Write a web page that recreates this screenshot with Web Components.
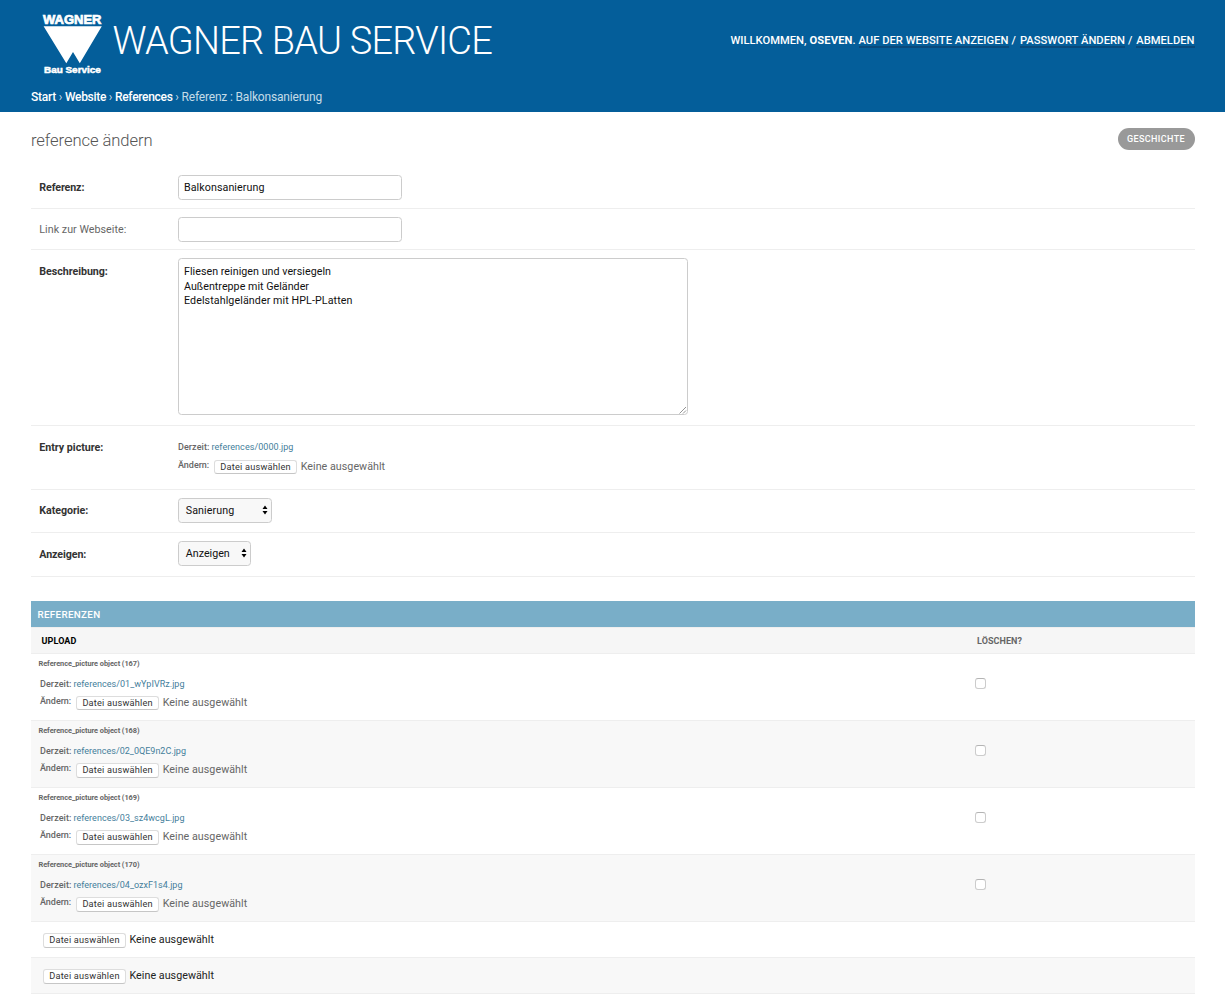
<!DOCTYPE html>
<html lang="de">
<head>
<meta charset="utf-8">
<title>Referenz : Balkonsanierung</title>
<style>
html,body{margin:0;padding:0;background:#fff}
body{font-family:Roboto,"Liberation Sans",sans-serif;font-size:10.7px;color:#333;width:1225px;height:1000px;overflow:hidden}
</style>
</head>
<body>
<admin-page></admin-page>
<script>
const define = (name, render) => customElements.define(name, class extends HTMLElement {
  connectedCallback() {
    if (this.shadowRoot) return;
    this.attachShadow({mode: 'open'}).innerHTML = render(this);
  }
});

define('brand-logo', () => `
<style>:host{display:block;width:62px;height:64px;flex:none}svg{display:block}
text{fill:#fff;font-family:"Liberation Sans",sans-serif;font-weight:700;stroke:#fff}</style>
<svg width="62" height="64" viewBox="0 0 62 64">
<text x="1" y="12.4" font-size="12.6" stroke-width=".7" textLength="58.5" lengthAdjust="spacingAndGlyphs">WAGNER</text>
<path d="M1.6 14.2H59.8L37.8 51.2L31 40L24.3 51.2Z" fill="#fff"/>
<text x="2" y="60.5" font-size="9.2" stroke-width=".5" textLength="56.8" lengthAdjust="spacingAndGlyphs">Bau Service</text>
</svg>`);

define('user-tools', () => `
<style>:host{display:flex;font-size:11.2px;font-weight:500;line-height:14px;color:#fff;margin-top:33px;height:16px}
t-x{position:relative;top:.6px}
a{display:block;height:12.8px;border-bottom:2px solid #094a7c}
b{font-weight:700}</style>
<t-x w="76">WILLKOMMEN,</t-x><b style="margin-left:3px"><t-x w="43">OSEVEN</t-x></b><t-x w="3">.</t-x>
<a style="margin-left:3px"><t-x w="150">AUF DER WEBSITE ANZEIGEN</t-x></a>
<t-x w="5" style="margin:0 3.5px 0 3px">/</t-x><a><t-x w="105">PASSWORT ÄNDERN</t-x></a>
<t-x w="5" style="margin:0 3.2px 0 3px">/</t-x><a><t-x w="58.3">ABMELDEN</t-x></a>`);

define('bread-crumbs', () => `
<style>:host{display:flex;font-size:12px;line-height:16px;color:#c4dce8;padding-left:.5px}
b{font-weight:500;color:#fff}i{font-style:normal;width:9px;text-align:center}</style>
<b><t-x w="25">Start</t-x></b><i>›</i><b><t-x w="41">Website</t-x></b><i>›</i><b><t-x w="57.5">References</t-x></b><i>›</i><t-x w="140.5">Referenz : Balkonsanierung</t-x>`);

define('site-header', () => `
<style>:host{display:flex;flex-direction:column;box-sizing:border-box;height:112px;padding:0 30.5px;background:#045e9a}
.top{display:flex;justify-content:space-between;height:89px}
.brand{display:flex;padding:12px 0 0 11px}
.name{font-size:38px;font-weight:300;line-height:44px;color:#fff;margin:7px 0 0 9px}</style>
<div class="top"><div class="brand"><brand-logo></brand-logo><div class="name"><t-x w="379.5">WAGNER BAU SERVICE</t-x></div></div><user-tools></user-tools></div>
<bread-crumbs></bread-crumbs>`);

define('page-title', () => `
<style>:host{display:flex;justify-content:space-between;padding:16px 30.5px 0 31px;height:48px;box-sizing:border-box}
h1{margin:0;font-size:16.6px;font-weight:300;line-height:25.5px;color:#555}
a{height:22px;width:77px;border-radius:11px;background:#999;color:#fff;font-size:9px;font-weight:500;line-height:22px;display:flex;justify-content:center}</style>
<h1><t-x w="121.5">reference ändern</t-x></h1><a><t-x w="58">GESCHICHTE</t-x></a>`);

define('form-row', el => `
<style>:host{display:flex;box-sizing:border-box;margin:0 30.5px 0 31px;border-bottom:1px solid #eee;height:${el.getAttribute('h')}px;padding:${el.getAttribute('top') || 8}px 0 0 8.3px}
.label{width:138.7px;flex:none;line-height:${el.getAttribute('lh') || 26}px;font-weight:${el.hasAttribute('optional') ? 400 : 700};color:${el.hasAttribute('optional') ? '#666' : '#333'}}</style>
<div class="label"><t-x w="${el.getAttribute('lw')}">${el.getAttribute('label')}</t-x></div><slot></slot>`);

define('text-box', el => `
<style>:host{display:flex;flex-direction:column;box-sizing:border-box;position:relative;width:${el.getAttribute('w')}px;height:${el.getAttribute('h')}px;border:1px solid #ccc;border-radius:3.5px;background:#fff;color:#111;padding:${el.hasAttribute('resizable') ? 5.8 : 4.5}px 5px;line-height:14.7px}
svg{position:absolute;right:0;bottom:0}</style>
<slot></slot>${el.hasAttribute('resizable') ? '<svg width="8" height="8" viewBox="0 0 8 8"><path d="M.5 7.5L7 1M4 7.5L7 4.5" stroke="#888" stroke-width=".9"/></svg>' : ''}`);

define('select-box', el => `
<style>:host{display:flex;justify-content:space-between;align-items:center;box-sizing:border-box;width:${el.getAttribute('w')}px;height:25px;border:1px solid #ccc;border-radius:3.5px;background:#f8f8f8;color:#111;padding:0 2.5px 0 6.8px;line-height:14px}
svg{margin-top:-1px}</style>
<slot></slot><svg width="6" height="10" viewBox="0 0 6 10"><path d="M3 .6L5.5 4H.5ZM3 9.4L.5 6H5.5Z" fill="#000"/></svg>`);

define('file-picker', el => `
<style>:host{display:flex;color:${el.getAttribute('tone') || '#666'};line-height:15.4px;font-size:10.7px}
.btn{box-sizing:border-box;width:82.5px;height:14.5px;margin-top:.8px;border:1px solid #ddd;border-bottom-color:#c6c6c6;border-radius:3px;background:#fff;color:#333;font-size:9.2px;line-height:12.8px;padding-left:5.2px;margin-right:4px}</style>
<div class="btn"><t-x w="70.5">Datei auswählen</t-x></div><t-x w="84.5">Keine ausgewählt</t-x>`);

define('file-upload', el => `
<style>:host{display:block;font-size:9px;color:#666}
div{display:flex;line-height:12px}b{font-weight:500}
a{color:#447e9b;margin-left:2px}.change{margin-top:5.5px;height:16px}.change b{margin-right:5px;line-height:13.8px}</style>
<div><b><t-x w="31.5">Derzeit:</t-x></b><a><t-x w="${el.getAttribute('lw')}">${el.getAttribute('file')}</t-x></a></div>
<div class="change"><b><t-x w="31.2">Ändern:</t-x></b><file-picker></file-picker></div>`);

define('picture-row', el => `
<style>:host{display:block;box-sizing:border-box;height:67.1px;border-bottom:1px solid #eee;background:${el.hasAttribute('alt') ? '#f8f8f8' : '#fff'}}
.orig{font-size:7.4px;font-weight:700;line-height:10px;color:#666;padding:5px 0 0 7.5px}
.cells{display:flex;padding:8.7px 0 0 9px}
.file{width:935px}
.check{box-sizing:border-box;width:11px;height:11px;border:1px solid #ccc;border-top-color:#b4b4b4;border-radius:3px;background:#fff;margin-top:.2px}</style>
<div class="orig"><t-x w="101">Reference_picture object (${el.getAttribute('n')})</t-x></div>
<div class="cells"><div class="file"><file-upload file="${el.getAttribute('file')}" lw="${el.getAttribute('lw')}"></file-upload></div><div class="check"></div></div>`);

define('empty-row', el => `
<style>:host{display:block;box-sizing:border-box;height:36px;border-bottom:1px solid #eee;padding:10px 0 0 12px;background:${el.hasAttribute('alt') ? '#f8f8f8' : '#fff'}}</style>
<file-picker tone="#222"></file-picker>`);

define('inline-group', () => `
<style>:host{display:block;margin:24.5px 30.5px 0 31px}
h2{margin:0;height:26.3px;background:#79aec8;color:#fff;font-size:9.8px;font-weight:500;line-height:27px;padding-left:6.5px}
.head{display:flex;box-sizing:border-box;height:26.7px;background:#f6f6f6;border-top:1px solid #eee;border-bottom:1px solid #eee;font-size:9px;font-weight:700;line-height:26px;color:#666;padding-left:10.5px}
.up{width:935.5px;color:#000}</style>
<h2><t-x w="63">REFERENZEN</t-x></h2>
<div class="head"><div class="up"><t-x w="35">UPLOAD</t-x></div><t-x w="45">LÖSCHEN?</t-x></div>
<picture-row n="167" file="references/01_wYpIVRz.jpg" lw="111"></picture-row>
<picture-row alt n="168" file="references/02_0QE9n2C.jpg" lw="112.5"></picture-row>
<picture-row n="169" file="references/03_sz4wcgL.jpg" lw="111"></picture-row>
<picture-row alt n="170" file="references/04_ozxF1s4.jpg" lw="109"></picture-row>
<empty-row></empty-row><empty-row alt></empty-row>`);

define('admin-page', () => `
<style>:host{display:block}</style>
<site-header></site-header>
<page-title></page-title>
<form-row label="Referenz:" lw="45" h="48.5" top="15"><text-box w="224.3" h="25"><t-x w="80.5">Balkonsanierung</t-x></text-box></form-row>
<form-row label="Link zur Webseite:" lw="87" h="41.5" optional><text-box w="224.3" h="25"></text-box></form-row>
<form-row label="Beschreibung:" lw="68.5" h="176" top="8" lh="27.4"><text-box w="510.4" h="157" resizable><t-x w="147">Fliesen reinigen und versiegeln</t-x><t-x w="125">Außentreppe mit Geländer</t-x><t-x w="168.5">Edelstahlgeländer mit HPL-PLatten</t-x></text-box></form-row>
<form-row label="Entry picture:" lw="64" h="64" top="8.4" lh="27.4"><file-upload style="margin-top:6.9px" file="references/0000.jpg" lw="82"></file-upload></form-row>
<form-row label="Kategorie:" lw="49" h="43"><select-box w="94"><t-x w="48.5">Sanierung</t-x></select-box></form-row>
<form-row label="Anzeigen:" lw="47" h="43.5" top="8" lh="27"><select-box w="73"><t-x w="44">Anzeigen</t-x></select-box></form-row>
<inline-group></inline-group>`);

/* A single line of text tracked so that it fills a given width. */
customElements.define('t-x', class extends HTMLElement {
  connectedCallback() {
    if (this.shadowRoot) return;
    const root = this.attachShadow({mode: 'open'});
    root.innerHTML = '<style>:host{display:block;white-space:nowrap;flex:none}span{display:inline-block}</style><span><slot></slot></span>';
    const w = +this.getAttribute('w'), span = root.querySelector('span');
    const n = this.textContent.length;
    const natural = span.getBoundingClientRect().width;
    if (n > 1) span.style.letterSpacing = ((w - natural) / n).toFixed(4) + 'px';
    this.style.width = w + 'px';
  }
});
</script>
</body>
</html>
